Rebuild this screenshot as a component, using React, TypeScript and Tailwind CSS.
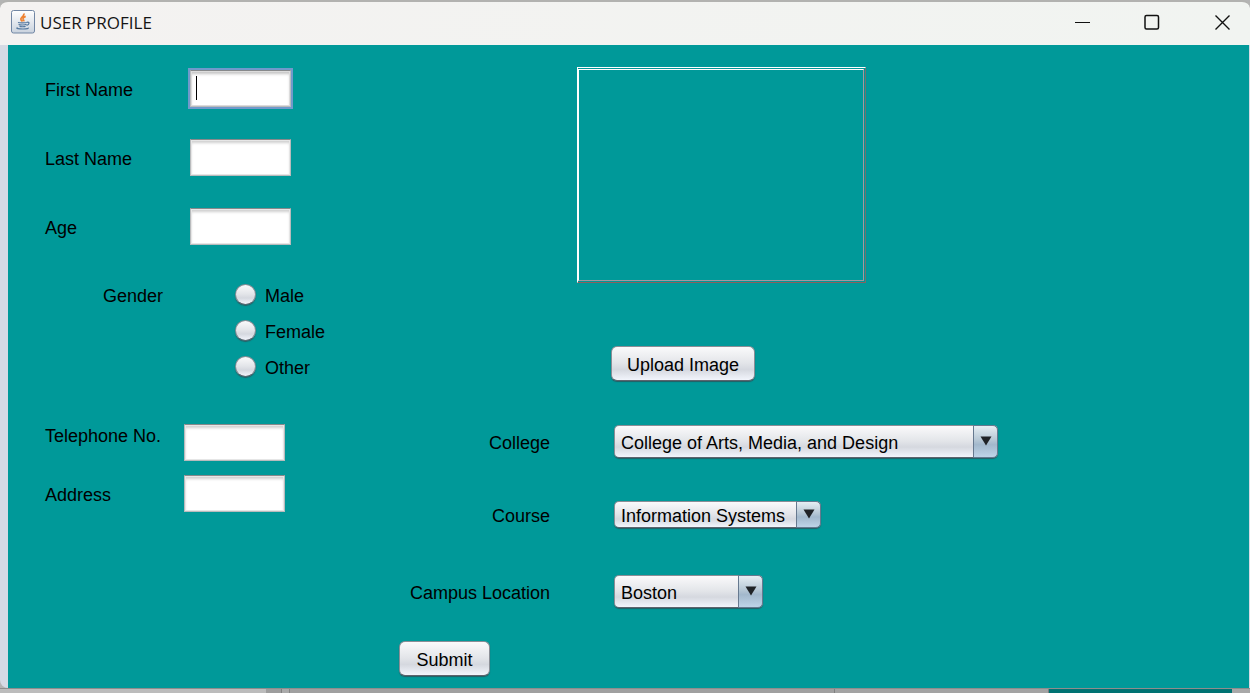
import React from "react";

const raised =
  "border border-[#8b8e96] border-b-[#5e636d] bg-[linear-gradient(180deg,#fafafb_0%,#e3e5e9_48%,#d5d8df_68%,#f2f5fc_100%)] shadow-[0_1px_1px_rgba(60,60,70,0.65)]";

function JavaIcon() {
  return (
    <svg viewBox="0 0 24 24" className="h-6 w-6" aria-hidden="true">
      <defs>
        <linearGradient id="tile" x1="0" y1="0" x2="0" y2="1">
          <stop offset="0" stopColor="#ffffff" />
          <stop offset="1" stopColor="#c9d2de" />
        </linearGradient>
      </defs>
      <rect x="0.5" y="0.5" width="23" height="22.5" rx="2" fill="url(#tile)" stroke="#7186a4" />
      <path d="M12.700 3.500c1.500 2.600-3.800 4-2.800 6.100.3.800 1.100 1.300 1.600 1.900M14.700 6.400c-1.800.8-3.100 1.800-2.600 2.900.4.700 1.200 1 .5 2.100" fill="none" stroke="#ee8130" strokeWidth="1.700" />
      <path d="M7 12.500c1.500.6 7 .5 9 0M7.600 14.300c.8.9 6.800.9 7.800 0M8.600 16.200c.8.700 5.100.700 5.900 0M15.700 12.300c3.200-.8 3 2.400-.2 3M6.600 17.600c-2.400.8 1.400 1.400 5.400 1.400s6-.6 5-1.400" fill="none" stroke="#55789f" strokeWidth="1.200" />
    </svg>
  );
}

function TitleBar() {
  return (
    <header className="flex h-[45px] items-center rounded-t-lg border-t-2 border-[#b2b2b0] bg-linear-to-r from-[#f4f2f1] to-[#f1f4f1] pb-[3px] pl-[11px]">
      <JavaIcon />
      <h1 className="ml-[5px] flex-1 pt-px font-['Open_Sans','Noto_Sans',sans-serif] text-[17px] leading-6 text-[#151515]">
        USER PROFILE
      </h1>
      <div className="flex items-center gap-[54px] pr-5">
        <button type="button" aria-label="Minimize">
          <svg viewBox="0 0 16 16" className="h-4 w-4"><path d="M1 8.500H16" stroke="#111" /></svg>
        </button>
        <button type="button" aria-label="Maximize">
          <svg viewBox="0 0 16 16" className="h-4 w-4">
            <rect x="1" y="1.500" width="13.500" height="13.500" rx="1.500" fill="none" stroke="#111" strokeWidth="1.500" />
          </svg>
        </button>
        <button type="button" aria-label="Close">
          <svg viewBox="0 0 16 16" className="h-4 w-4"><path d="M1.500 1.500L15.500 15.500M15.500 1.500L1.500 15.500" stroke="#111" strokeWidth="1.400" /></svg>
        </button>
      </div>
    </header>
  );
}

function TextField({ id, label, active, near, top }: { id: string; label: string; active?: boolean; near?: boolean; top?: boolean }) {
  return (
    <div className={"flex " + (top ? "items-start" : "items-center")}>
      <label htmlFor={id} className={(near ? "w-[139px]" : "w-[145px]") + (top ? "" : " pt-[2px]")}>{label}</label>
      <div className="relative flex">
        <input
          id={id}
          type="text"
          className={
            "h-[37px] w-[101px] border border-[#b9bbbd] border-t-[#87898b] bg-white px-[6px] caret-transparent outline-none " +
            (active
              ? "shadow-[inset_0_0_0_1px_#dcdcdc,inset_0_3px_3px_#c4c4c4,0_0_0_2px_#7199cb]"
              : "shadow-[inset_0_0_0_1px_#e6e6e6,inset_0_3px_3px_#cfcfcf]")
          }
        />
        {active && <span className="absolute top-[6px] left-[6px] h-6 w-px bg-black" />}
      </div>
    </div>
  );
}

function Combo({ id, label, options, size }: { id: string; label: string; options: string[]; size: string }) {
  return (
    <div className="flex items-center">
      <label htmlFor={id} className="mr-16 w-[170px] pt-[2px] text-right">{label}</label>
      <div className={"relative " + size}>
        <select id={id} className={"block h-full w-full appearance-none rounded-[5px] pt-[2px] pr-7 pl-[6px] outline-none " + raised}>
          {options.map((o) => <option key={o}>{o}</option>)}
        </select>
        <span className="pointer-events-none absolute inset-y-0 right-0 flex w-[25px] items-center justify-center rounded-r-[5px] border border-[#66798f] bg-[linear-gradient(180deg,#e6eef3_0%,#b6c7d5_45%,#a2b8cc_60%,#bed4e8_100%)]">
          <svg viewBox="0 0 12 10" className="mb-[2px] h-[10px] w-3"><path d="M0.500 0.500H11.500L6 9.500Z" fill="#202327" /></svg>
        </span>
      </div>
    </div>
  );
}

function PersonalDetails() {
  return (
    <section className="w-[372px] shrink-0 pt-[25px] pl-[37px]">
      <div className="flex flex-col gap-8">
        <TextField id="first" label="First Name" active />
        <TextField id="last" label="Last Name" />
        <TextField id="age" label="Age" />
      </div>
      <fieldset className="mt-[33px] flex pl-[58px]">
        <legend className="float-left w-[132px] leading-[36px]">Gender</legend>
        <div className="flex flex-col">
          {["Male", "Female", "Other"].map((g) => (
            <label key={g} className="flex h-9 items-center gap-[9px]">
              <input type="radio" name="gender" value={g} className={"mb-[3px] h-[21px] w-[21px] appearance-none rounded-full checked:shadow-[inset_0_0_0_5px_#d5d8df,inset_0_0_0_9px_#222] " + raised} />
              {g}
            </label>
          ))}
        </div>
      </fieldset>
      <div className="mt-[38px] flex flex-col gap-[14px]">
        <TextField id="phone" label="Telephone No." near top />
        <TextField id="address" label="Address" near />
      </div>
    </section>
  );
}

function StudyDetails() {
  return (
    <section className="min-w-0 flex-1 pt-[22px]">
      <div
        role="img"
        aria-label="Profile image"
        className="ml-[197px] h-[216px] w-[289px] border border-t-white border-r-[#72706d] border-b-[#8a605d] border-l-white pt-px pr-px pb-px"
      >
        <div className="h-full border border-t-white border-r-[#a3979f] border-b-[#a3979f] border-l-white" />
      </div>
      <button type="button" className={"mt-[63px] ml-[231px] h-[35px] w-[144px] rounded-[6px] pt-[2px] " + raised}>Upload Image</button>
      <div className="mt-11">
        <Combo id="college" label="College" size="h-[33px] w-[384px]" options={["College of Arts, Media, and Design"]} />
      </div>
      <div className="mt-[43px]">
        <Combo id="course" label="Course" size="h-[27px] w-[207px]" options={["Information Systems"]} />
      </div>
      <div className="mt-[47px]">
        <Combo id="campus" label="Campus Location" size="h-[33px] w-[149px]" options={["Boston"]} />
      </div>
      <button type="submit" className={"mt-[33px] ml-[19px] h-[35px] w-[91px] rounded-[6px] pt-[2px] " + raised}>Submit</button>
    </section>
  );
}

export default function App() {
  return (
    <div className="flex min-h-screen flex-col bg-[#b4b4b4] font-['Liberation_Sans',Arial,sans-serif] text-[18px] leading-6 text-black">
      <TitleBar />
      <main className="flex flex-1 rounded-bl-lg bg-[#d6dae4] pr-px pl-2">
        <form className="flex flex-1 bg-[#009999]" onSubmit={(e) => e.preventDefault()}>
          <PersonalDetails />
          <StudyDetails />
        </form>
      </main>
      <footer className="flex h-[5px] border-t border-[#8d8d8d] bg-[#bcbcbc]" aria-hidden="true">
        <span className="w-[266px]" />
        <span className="w-4 border-r border-[#808080] bg-[#9d9d9d]" />
        <span className="w-2 border-r border-[#858585] bg-[#aaaaaa]" />
        <span className="flex-1 bg-[#a0a0a0]" />
        <span className="w-[215px] border-r border-l border-[#808080] bg-[#a3a3a3]" />
        <span className="w-[183px] bg-[#007373]" />
        <span className="w-[18px] bg-[#a8a8a8]" />
      </footer>
    </div>
  );
}
